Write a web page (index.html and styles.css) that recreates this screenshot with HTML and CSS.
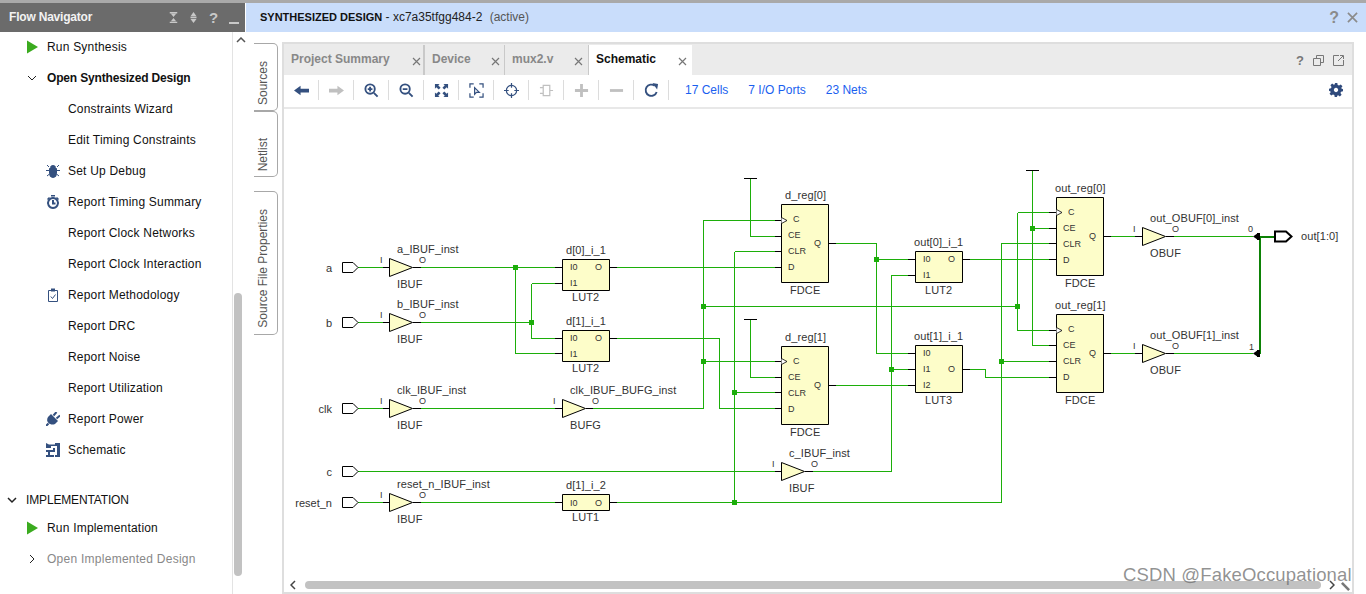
FILE: index.html
```html
<!DOCTYPE html>
<html lang="en">
<head>
<meta charset="utf-8">
<title>Flow Navigator - Schematic</title>
<link rel="stylesheet" href="styles.css">
</head>
<body>
<div class="app">
  <div class="topline"></div>
  <div class="main">
    <aside class="nav">
      <header class="nav-head">
        <span class="nav-title">Flow Navigator</span>
        <span class="nav-tools">
          <svg class="ni" viewBox="0 0 12 12" preserveAspectRatio="none"><path d="M1 0h10v1.500H1zM1 10.500h10V12H1zM6 5.500L2.500 2h7zM6 6.500L2.500 10h7z"/></svg>
          <svg class="ni" viewBox="0 0 12 12" preserveAspectRatio="none"><path d="M6 0l4 4.500H2zM6 12l4-4.500H2zM2 5.300h8v1.400H2z"/></svg>
          <span class="nq">?</span>
          <span class="nmin"></span>
        </span>
      </header>
      <div class="nav-body">
        <div class="nav-list">
          <div class="row l1"><svg class="play" viewBox="0 0 12 14"><path d="M0 0l12 7-12 7z"/></svg><span>Run Synthesis</span></div>
          <div class="row l1"><svg class="chev" viewBox="0 0 10 10"><path d="M1 3l4 4 4-4"/></svg><b>Open Synthesized Design</b></div>
          <div class="row l2"><i></i><span>Constraints Wizard</span></div>
          <div class="row l2"><i></i><span>Edit Timing Constraints</span></div>
          <div class="row l2"><svg class="ic" viewBox="0 0 14 14"><path d="M4.500 3.500a2.500 2 0 0 1 5 0zM3.500 4.500h7v5a3.500 4 0 0 1-7 0zM1 1l2 2M13 1l-2 2M0 6.500h3M14 6.500h-3M1 12l2.500-2M13 12l-2.500-2" class="bug"/></svg><span>Set Up Debug</span></div>
          <div class="row l2"><svg class="ic" viewBox="0 0 14 14"><path class="outl" d="M7 3a5 5 0 1 0 .01 0zM7 5v3.500h2.500"/><path d="M5 0h4v1.500H5zM11 2l2 2-1 1-2-2zM3 2L1 4l1 1 2-2z"/></svg><span>Report Timing Summary</span></div>
          <div class="row l2"><i></i><span>Report Clock Networks</span></div>
          <div class="row l2"><i></i><span>Report Clock Interaction</span></div>
          <div class="row l2"><svg class="ic" viewBox="0 0 14 14"><path class="thin" d="M2.500 2.500h9v11h-9z"/><path d="M5 0.500h4v3H5z"/><path class="thin" d="M4.800 8.500l1.700 2 3-4"/></svg><span>Report Methodology</span></div>
          <div class="row l2"><i></i><span>Report DRC</span></div>
          <div class="row l2"><i></i><span>Report Noise</span></div>
          <div class="row l2"><i></i><span>Report Utilization</span></div>
          <div class="row l2"><svg class="ic" viewBox="0 0 14 14"><path d="M5 2l7 7-3 3c-2.500 1-5 .5-6.500-1S.5 7.500 2 5z"/><path class="outl" d="M7.500 3.500l3-3.500M10.500 6.500L14 3.500M2.500 11.500L0 14"/></svg><span>Report Power</span></div>
          <div class="row l2"><svg class="ic" viewBox="0 0 14 14"><path d="M0 0l3 1.500h6V0h5v14H9v-2h2V3H5v2H0zM0 7h7V5h2v4H4v3h4v2H0v-2h2V9H0z"/></svg><span>Schematic</span></div>
          <div class="row sec"><svg class="chev2" viewBox="0 0 10 10"><path d="M1 3l4 4 4-4"/></svg><span>IMPLEMENTATION</span></div>
          <div class="row l1"><svg class="play" viewBox="0 0 12 14"><path d="M0 0l12 7-12 7z"/></svg><span>Run Implementation</span></div>
          <div class="row l1 off"><svg class="chev" viewBox="0 0 10 10"><path d="M3 1l4 4-4 4"/></svg><span>Open Implemented Design</span></div>
        </div>
        <div class="vscroll">
          <svg class="vup" viewBox="0 0 10 6"><path d="M1 5l4-4 4 4"/></svg>
          <div class="vthumb"></div>
        </div>
      </div>
    </aside>
    <section class="work">
      <header class="work-head">
        <span class="crumb"><b>SYNTHESIZED DESIGN</b> - xc7a35tfgg484-2 <em>(active)</em></span>
        <span class="wh-tools"><span class="wq">?</span><svg class="wx" viewBox="0 0 12 12"><path d="M1 1l10 10M11 1L1 11"/></svg></span>
      </header>
      <div class="work-body">
        <div class="side">
          <div class="vtab t1"><span>Sources</span></div>
          <div class="vtab t2"><span>Netlist</span></div>
          <div class="vtab t3"><span>Source File Properties</span></div>
        </div>
        <div class="panel">
          <div class="tabs">
            <div class="tab w1"><span>Project Summary</span><svg class="tx" viewBox="0 0 9 9"><path d="M1 1l7 7M8 1L1 8"/></svg></div>
            <div class="tab w2"><span>Device</span><svg class="tx" viewBox="0 0 9 9"><path d="M1 1l7 7M8 1L1 8"/></svg></div>
            <div class="tab w3"><span>mux2.v</span><svg class="tx" viewBox="0 0 9 9"><path d="M1 1l7 7M8 1L1 8"/></svg></div>
            <div class="tab w4 active"><span>Schematic</span><svg class="tx" viewBox="0 0 9 9"><path d="M1 1l7 7M8 1L1 8"/></svg></div>
            <div class="tab-tools">
              <span class="tq">?</span>
              <svg class="tt" viewBox="0 0 11 11"><path d="M3.500 3.500V.5h7v7h-3M.5 3.500h7v7h-7z"/></svg>
              <svg class="tt" viewBox="0 0 11 11"><path d="M6 .5H.5v10h10V5M5 6l5-5M7 .5h3.500V4"/></svg>
            </div>
          </div>
          <div class="toolbar">
            <div class="tb"><svg class="ti" viewBox="0 0 16 16"><path d="M0 8l7-5v3h9v4H7v3z"/></svg></div>
            <div class="tb dis"><svg class="ti" viewBox="0 0 16 16"><path d="M16 8l-7-5v3H0v4h9v3z"/></svg></div>
            <div class="tb"><svg class="ti" viewBox="0 0 16 16"><circle class="st" cx="6.500" cy="6.500" r="5"/><path class="st" d="M10.500 10.500l4 4M4 6.500h5M6.500 4v5"/></svg></div>
            <div class="tb"><svg class="ti" viewBox="0 0 16 16"><circle class="st" cx="6.500" cy="6.500" r="5"/><path class="st" d="M10.500 10.500l4 4M4 6.500h5"/></svg></div>
            <div class="tb"><svg class="ti" viewBox="0 0 16 16"><path d="M1 1h5L4.500 2.500 7 5 5 7 2.500 4.500 1 6zM15 1v5l-1.500-1.500L11 7 9 5l2.500-2.500L10 1zM1 15v-5l1.500 1.500L5 9l2 2-2.500 2.500L6 15zM15 15h-5l1.500-1.500L9 11l2-2 2.500 2.500L15 10z"/></svg></div>
            <div class="tb"><svg class="ti" viewBox="0 0 16 16"><path class="st1" d="M1 5V1h4M11 1h4v4M15 11v4h-4M5 15H1v-4"/><path class="st1" d="M6 5l0 7 2-2 3 0z"/></svg></div>
            <div class="tb"><svg class="ti" viewBox="0 0 16 16"><circle class="st1" cx="8" cy="8" r="5.500"/><path class="st1" d="M8 0v5M8 11v5M0 8h5M11 8h5"/></svg></div>
            <div class="tb dis"><svg class="ti" viewBox="0 0 16 16"><path class="st1" d="M4.500 2.500h7v11h-7zM4.500 5H1M4.500 11H1M11.500 8H15"/></svg></div>
            <div class="tb dis"><svg class="ti" viewBox="0 0 16 16"><path d="M6.500 1h3v5.500H15v3H9.500V15h-3V9.500H1v-3h5.500z"/></svg></div>
            <div class="tb dis"><svg class="ti" viewBox="0 0 16 16"><path d="M1 6.500h14v3H1z"/></svg></div>
            <div class="tb"><svg class="ti" viewBox="0 0 16 16"><path class="st" d="M13.500 9.500A6 6 0 1 1 11.500 3"/><path d="M9 0l6 1-1 6z"/></svg></div>
            <div class="links"><a>17 Cells</a><a>7 I/O Ports</a><a>23 Nets</a></div>
            <svg class="gear" viewBox="0 0 16 16"><path d="M6.500 0h3l.4 2.200 1.600.7 1.900-1.300 2 2-1.300 1.900.7 1.600L16 6.500v3l-2.200.4-.7 1.600 1.300 1.900-2 2-1.900-1.300-1.600.7L9.500 16h-3l-.4-2.200-1.600-.7-1.900 1.300-2-2 1.300-1.900-.7-1.600L0 9.500v-3l2.200-.4.700-1.600L1.600 2.600l2-2 1.900 1.300 1.600-.7zM8 5.500a2.500 2.500 0 1 0 .01 0z" fill-rule="evenodd"/></svg>
          </div>
          <div class="canvas">
            <svg class="sch" viewBox="284 109 1068 468" width="1068" height="468">
              <path class="wire" d="M358 267.500H383M421 267.500H555M515.500 267.500V353.500H555M358 322.500H383M421 322.500H531.500M531.500 283.500V338.500M531.500 283.500H555M531.500 338.500H555M358 408.500H383M421 408.500H555M593 408.500H703.500V220.500H775M703.500 306.500H1017.500M703.500 361.500H775M1017.500 212.500V330.500M1017.500 212.500H1049M1017.500 330.500H1049M617 267.500H775M617 338.500H719.500V408.500H775M750.500 178.500V236.500H775M750.500 319.500V377.500H775M734.500 251.500V502.500M734.500 251.500H775M734.500 392.500H775M358 502.500H383M421 502.500H555M617 502.500H1001.500V243.500H1049M1001.500 361.500H1049M358 471.500H775M813 471.500H891.500V275.500H908M891.500 369.500H908M836 243.500H876.500V353.500H908M876.500 259.500H908M836 385.500H908M970 259.500H1049M970 369.500H985.500V377.500H1049M1032.500 170.500V345.500H1049M1032.500 228.500H1049M1111 236.500H1135M1174 236.500H1253M1111 353.500H1135M1174 353.500H1253"/>
              <path class="bus" d="M1259.500 236V354M1259 236.500H1275"/>
              <path class="tip" d="M1253 236.500L1258 233V240ZM1253 353.500L1258 350V357Z"/>
              <path class="tip" d="M1257 233h3v7h-3zM1257 350h3v7h-3z"/>
              <path class="junc" d="M513 265h5v5h-5zM529 320h5v5h-5zM701 304h5v5h-5zM701 359h5v5h-5zM732 390h5v5h-5zM732 500h5v5h-5zM874 257h5v5h-5zM889 367h5v5h-5zM999 359h5v5h-5zM1015 304h5v5h-5zM1030 226h5v5h-5z"/>
              <path class="lead" d="M383 267.500H389M413 267.500H421M383 322.500H389M413 322.500H421M383 408.500H389M413 408.500H421M383 502.500H389M413 502.500H421M555 408.500H562M586 408.500H593M775 471.500H781M805 471.500H813M1135 236.500H1142M1166 236.500H1174M1135 353.500H1142M1166 353.500H1174M555 267.500H562M555 283.500H562M610 267.500H617M555 338.500H562M555 353.500H562M610 338.500H617M555 502.500H562M610 502.500H617M908 259.500H915M908 275.500H915M962 259.500H970M908 353.500H915M908 369.500H915M908 385.500H915M962 369.500H970M775 220.500H781M775 236.500H781M775 251.500H781M775 267.500H781M828 243.500H836M775 361.500H781M775 377.500H781M775 392.500H781M775 408.500H781M828 385.500H836M1049 212.500H1056M1049 228.500H1056M1049 243.500H1056M1049 259.500H1056M1104 236.500H1111M1049 330.500H1056M1049 345.500H1056M1049 361.500H1056M1049 377.500H1056M1104 353.500H1111M744 178.500H757M744 319.500H757M1026 170.500H1039"/>
              <path class="port" d="M342.500 262.500H353L358 267.500L353 272.500H342.500ZM342.500 317.500H353L358 322.500L353 327.500H342.500ZM342.500 403.500H353L358 408.500L353 413.500H342.500ZM342.500 466.500H353L358 471.500L353 476.500H342.500ZM342.500 497.500H353L358 502.500L353 507.500H342.500Z"/>
              <path class="port thick" d="M1275 231.500H1286L1291.500 236.500L1286 241.500H1275Z"/>
              <path class="cell" d="M389.500 258.500L412.500 267.500L389.500 276.500ZM389.500 313.500L412.500 322.500L389.500 331.500ZM389.500 399.500L412.500 408.500L389.500 417.500ZM389.500 493.500L412.500 502.500L389.500 511.500ZM562.500 399.500L585.500 408.500L562.500 417.500ZM781.500 462.500L804.500 471.500L781.500 480.500ZM1142.500 227.500L1165.500 236.500L1142.500 245.500ZM1142.500 344.500L1165.500 353.500L1142.500 362.500Z"/>
              <path class="cell" d="M562.500 259.500h47v31h-47zM562.500 330.500h47v31h-47zM562.500 494.500h47v16h-47zM915.500 251.500h47v31h-47zM915.500 345.500h47v47h-47zM781.500 204.500h47v78h-47zM781.500 346.500h47v78h-47zM1056.500 197.500h47v78h-47zM1056.500 314.500h47v78h-47z"/>
              <path class="clk" d="M781.500 217.500L787 220.500L781.500 223.500M781.500 358.500L787 361.500L781.500 364.500M1056.500 209.500L1062 212.500L1056.500 215.500M1056.500 327.500L1062 330.500L1056.500 333.500"/>

              <g class="plabel">
                <text x="332" y="271.500">a</text><text x="332" y="326.500">b</text><text x="332" y="412.500">clk</text><text x="332" y="475.500">c</text><text x="332" y="506.500">reset_n</text>
              </g>
              <g class="name">
                <text x="397" y="253">a_IBUF_inst</text><text x="397" y="308">b_IBUF_inst</text><text x="397" y="394">clk_IBUF_inst</text><text x="397" y="488">reset_n_IBUF_inst</text><text x="570" y="394">clk_IBUF_BUFG_inst</text><text x="789" y="457">c_IBUF_inst</text><text x="1150" y="222">out_OBUF[0]_inst</text><text x="1150" y="339">out_OBUF[1]_inst</text>
                <text x="566" y="254">d[0]_i_1</text><text x="566" y="325">d[1]_i_1</text><text x="566" y="489">d[1]_i_2</text><text x="914" y="246">out[0]_i_1</text><text x="914" y="340">out[1]_i_1</text>
                <text x="785" y="199">d_reg[0]</text><text x="785" y="341">d_reg[1]</text><text x="1055" y="192">out_reg[0]</text><text x="1055" y="309">out_reg[1]</text>
                <text x="397" y="288">IBUF</text><text x="397" y="343">IBUF</text><text x="397" y="429">IBUF</text><text x="397" y="523">IBUF</text><text x="570" y="429">BUFG</text><text x="789" y="492">IBUF</text><text x="1150" y="257">OBUF</text><text x="1150" y="374">OBUF</text>
                <text x="572" y="301">LUT2</text><text x="572" y="372">LUT2</text><text x="572" y="521">LUT1</text><text x="925" y="294">LUT2</text><text x="925" y="404">LUT3</text>
                <text x="790" y="294">FDCE</text><text x="790" y="436">FDCE</text><text x="1065" y="287">FDCE</text><text x="1065" y="404">FDCE</text>
                <text x="1301" y="240">out[1:0]</text>
              </g>
              <g class="pin">
                <text x="380" y="263">I</text><text x="419" y="263">O</text><text x="380" y="318">I</text><text x="419" y="318">O</text><text x="380" y="404">I</text><text x="419" y="404">O</text><text x="380" y="498">I</text><text x="419" y="498">O</text><text x="553" y="404">I</text><text x="592" y="404">O</text><text x="772" y="467">I</text><text x="811" y="467">O</text><text x="1133" y="232">I</text><text x="1172" y="232">O</text><text x="1133" y="349">I</text><text x="1172" y="349">O</text>
                <text x="595" y="270">O</text><text x="595" y="341">O</text><text x="595" y="506">O</text><text x="948" y="262">O</text><text x="948" y="372">O</text>
                <text x="1248" y="232">0</text><text x="1249" y="350">1</text>
                <text x="793" y="222">C</text><text x="788" y="238">CE</text><text x="788" y="254">CLR</text><text x="788" y="270">D</text><text x="814" y="246">Q</text>
                <text x="793" y="364">C</text><text x="788" y="380">CE</text><text x="788" y="396">CLR</text><text x="788" y="412">D</text><text x="814" y="388">Q</text>
                <text x="1068" y="215">C</text><text x="1063" y="231">CE</text><text x="1063" y="247">CLR</text><text x="1063" y="263">D</text><text x="1089" y="239">Q</text>
                <text x="1068" y="332">C</text><text x="1063" y="348">CE</text><text x="1063" y="364">CLR</text><text x="1063" y="380">D</text><text x="1089" y="356">Q</text>
              </g>
              <g class="pin small">
                <text x="570" y="270">I0</text><text x="570" y="286">I1</text><text x="570" y="341">I0</text><text x="570" y="357">I1</text><text x="570" y="506">I0</text>
                <text x="923" y="262">I0</text><text x="923" y="278">I1</text><text x="923" y="356">I0</text><text x="923" y="372">I1</text><text x="923" y="388">I2</text>
              </g>
            </svg>
          </div>
          <div class="hscroll">
            <svg class="ha" viewBox="0 0 6 10"><path d="M5 1L1 5l4 4"/></svg>
            <div class="hthumb"></div>
            <svg class="ha" viewBox="0 0 6 10"><path d="M1 1l4 4-4 4"/></svg>
            <svg class="hc" viewBox="0 0 10 10"><path d="M0 2l2-2 8 8-2 2z"/></svg>
          </div>
        </div>
      </div>
    </section>
  </div>
  <div class="mark">CSDN @FakeOccupational</div>
</div>
</body>
</html>
```
FILE: styles.css
```css
* { box-sizing: border-box; }
html, body { margin: 0; height: 100%; overflow: hidden; background: #fff; }
body { font-family: "Liberation Sans", Arial, sans-serif; font-size: 12px; color: #111; }
.app { position: relative; width: 1366px; height: 594px; display: flex; flex-direction: column; }
.topline { height: 3px; background: #a9a9a9; }
.main { flex: 1; display: flex; min-height: 0; }

.nav { width: 246px; display: flex; flex-direction: column; }
.nav-head { height: 29px; margin-right: 1px; background: #6b6b6b; color: #fff; display: flex; align-items: center; justify-content: space-between; padding: 0 6px 0 9px; }
.nav-title { font-weight: bold; font-size: 12px; color: #f2f2f2; letter-spacing: -.2px; margin-top: -1px; }
.nav-tools { display: flex; align-items: center; gap: 11px; }
.ni { width: 9px; height: 11px; fill: #c8c8c8; margin-top: -1px; }
.nq { font-weight: bold; font-size: 15px; color: #c8c8c8; width: 9px; margin-top: -1px; }
.nmin { width: 10px; height: 2px; background: #c8c8c8; margin: 10px 0 0 0; }
.nav-body { flex: 1; display: flex; min-height: 0; }
.nav-list { flex: 1; padding-top: 0; margin-top: -1px; }
.row { height: 31px; display: flex; align-items: center; font-size: 12px; white-space: nowrap; letter-spacing: .2px; }
.row b { letter-spacing: -.17px; }
.row.l1 { padding-left: 27px; }
.row.l2 { padding-left: 46px; }
.row > i, .ic { width: 14px; height: 14px; margin-right: 8px; flex: none; }
.ic { fill: #34507f; stroke: none; }
.ic .bug { stroke: #34507f; stroke-width: 1; }
.ic .outl { fill: none; stroke: #34507f; stroke-width: 2; }
.ic .thin { fill: none; stroke: #34507f; stroke-width: 1; }
.play { width: 11px; height: 14px; margin-right: 9px; fill: #3bab1f; flex: none; }
.chev, .chev2 { width: 10px; height: 10px; margin-right: 10px; fill: none; stroke: #222; stroke-width: 1; flex: none; }
.chev2 { stroke-width: 1.500; margin-right: 9px; }
.row.sec { padding-left: 7px; height: 24px; margin-top: 23px; letter-spacing: -.15px; }
.row.off { color: #888; letter-spacing: .26px; }
.vscroll { width: 14px; position: relative; border-left: 1px solid #e3e3e3; display: flex; flex-direction: column; align-items: flex-start; padding: 5px 0 0 1px; }
.vup { width: 10px; height: 6px; margin-left: 2px; fill: none; stroke: #555; stroke-width: 1.500; }
.vthumb { width: 8px; height: 283px; margin-top: 250px; background: #c2c2c2; border-radius: 4px; }

.work { flex: 1; display: flex; flex-direction: column; min-width: 0; }
.work-head { height: 29px; background: #c9ddfb; display: flex; align-items: center; justify-content: space-between; padding: 0 8px 0 14px; }
.crumb { font-size: 12px; color: #222; margin-top: -1px; }
.crumb b { color: #111; font-size: 11px; }
.crumb em { font-style: normal; color: #555; margin-left: 4px; }
.wh-tools { display: flex; align-items: center; gap: 8px; }
.wq { font-weight: bold; font-size: 16px; color: #8b8b8b; }
.wx { width: 11px; height: 11px; fill: none; stroke: #8b8b8b; stroke-width: 1.800; }
.work-body { flex: 1; display: flex; padding: 10px 12px 0 8px; min-height: 0; }

.side { width: 28px; flex: none; display: flex; flex-direction: column; padding-top: 1px; }
.vtab { width: 24px; border: 1px solid #a8a8a8; border-left: 0; border-radius: 0 5px 5px 0; display: flex; align-items: flex-end; justify-content: flex-start; color: #555; font-size: 12px; padding: 0 0 5px 2px; }
.vtab span { writing-mode: vertical-rl; transform: rotate(180deg); white-space: nowrap; }
.t1 { height: 68px; }
.t2 { height: 66px; }
.t3 { height: 144px; margin-top: 14px; padding-bottom: 6px; }

.panel { flex: 1; display: flex; flex-direction: column; border: 2px solid #dedede; min-width: 0; background: #fff; }
.tabs { height: 31px; background: #ebebeb; display: flex; align-items: flex-end; position: relative; flex: none; }
.tab { height: 30px; display: flex; align-items: center; position: relative; font-weight: bold; font-size: 12px; color: #888; padding-left: 7px; border-right: 2px solid #c9c9c9; }
.tab span { margin-top: -2px; }
.tx { position: absolute; right: 4px; top: 12px; width: 9px; height: 9px; fill: none; stroke: #777; stroke-width: 1.200; }
.w1 { width: 141px; }
.w1 .tx { right: 2px; }
.w2 { width: 80px; border-right-width: 1px; }
.w3 { width: 84px; border-right: 1px solid #c9c9c9; }
.w3 .tx { right: 5px; }
.w4 { width: 103px; border: 0; }
.tab.active { background: #fff; color: #111; }
.tab.active .tx { right: 5px; }
.tab-tools { position: absolute; right: 8px; top: 9px; display: flex; align-items: center; gap: 9px; }
.tq { font-weight: bold; font-size: 13px; color: #777; }
.tt { width: 11px; height: 11px; fill: none; stroke: #777; stroke-width: 1; }

.toolbar { height: 34px; flex: none; display: flex; align-items: center; border-bottom: 2px solid #e8e8e8; padding-bottom: 2px; }
.tb { width: 35px; height: 20px; flex: none; display: flex; align-items: center; justify-content: center; border-right: 1px solid #dcdcdc; }
.ti { width: 15px; height: 15px; fill: #34507f; }
.ti .st { fill: none; stroke: #34507f; stroke-width: 2; }
.ti .st1 { fill: none; stroke: #34507f; stroke-width: 1.300; }
.tb.dis .ti { fill: #c0c0c0; }
.tb.dis .st1 { stroke: #c0c0c0; }
.links { display: flex; gap: 20px; margin-left: 16px; font-size: 12px; flex: 1; }
.links a { color: #1a5fef; }
.gear { width: 14px; height: 14px; fill: #2f4a7c; margin-right: 9px; }

.canvas { flex: 1; min-height: 0; overflow: hidden; }
.sch { display: block; }
.wire { fill: none; stroke: #1cae0a; stroke-width: 1; shape-rendering: crispEdges; }
.bus { fill: none; stroke: #0d8206; stroke-width: 2; shape-rendering: crispEdges; }
.tip { fill: #000; }
.junc { fill: #1cae0a; }
.lead { fill: none; stroke: #000; stroke-width: 1; shape-rendering: crispEdges; }
.port { fill: #fff; stroke: #000; stroke-width: 1; }
.port.thick { stroke-width: 2; }
.cell { fill: #fdfdc9; stroke: #000; stroke-width: 1; }
.clk { fill: #fff; stroke: #000; stroke-width: .8; }
.plabel text { font-size: 11px; fill: #333; text-anchor: end; }
.name text { font-size: 11px; fill: #333; letter-spacing: .1px; }
.pin text { font-size: 9px; fill: #333; }

.hscroll { height: 14px; flex: none; display: flex; align-items: center; padding: 0 2px 0 6px; }
.ha { width: 6px; height: 10px; fill: none; stroke: #444; stroke-width: 1.500; flex: none; }
.hthumb { width: 1017px; height: 8px; margin: 0 8px 0 9px; background: #c2c2c2; border-radius: 4px; }
.hc { width: 9px; height: 9px; fill: #777; margin-left: 6px; margin-top: 2px; }

.mark { position: absolute; left: 1123px; top: 564px; font-size: 18.500px; letter-spacing: .15px; color: rgba(110,110,110,.75); white-space: nowrap; }
```
